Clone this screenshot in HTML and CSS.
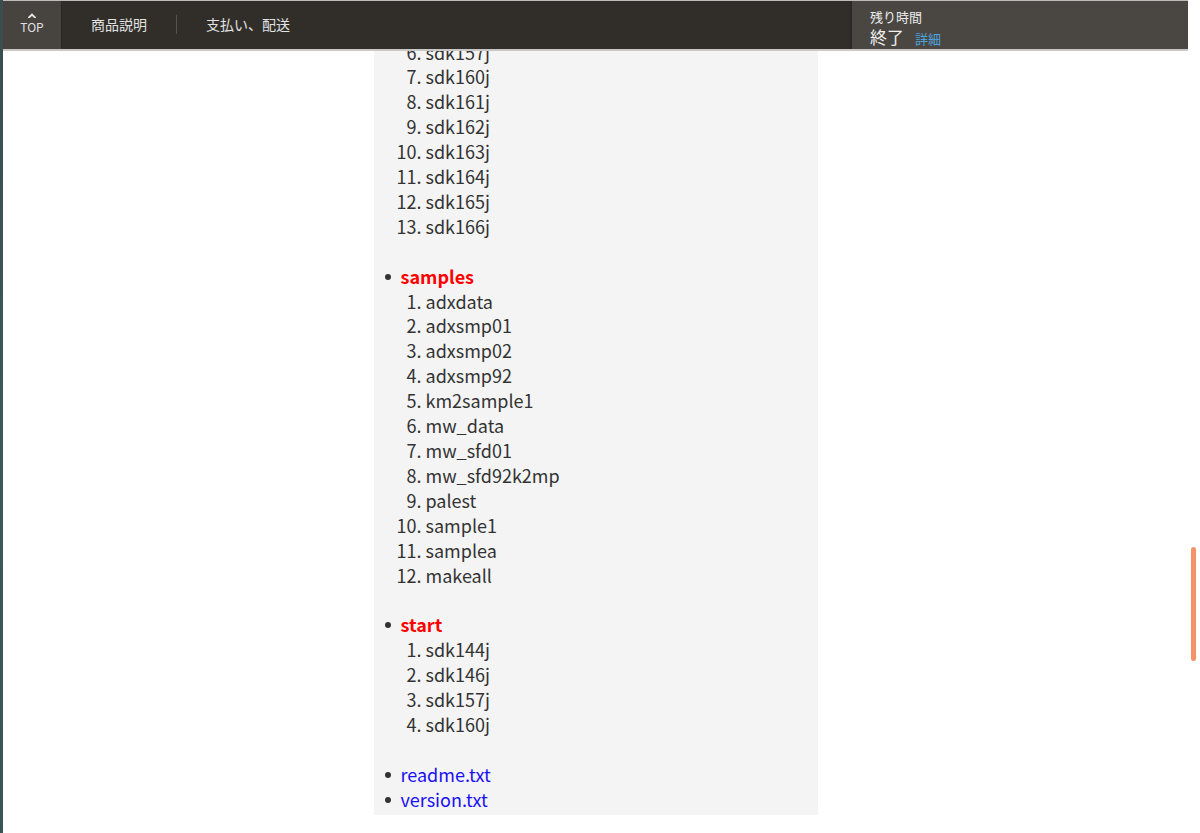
FILE: index.html
```html
<!DOCTYPE html>
<html lang="ja">
<head>
<meta charset="utf-8">
<title>商品説明</title>
<link rel="stylesheet" href="styles.css">
</head>
<body>
<div class="frame">
  <div class="strip"></div>
  <div class="page">
    <header class="topbar">
      <a class="top-btn" href="#">
        <svg class="top-icon" width="8" height="5" viewBox="0 0 8 5"><path d="M1 4.5 L4 1.5 L7 4.5" fill="none" stroke="#e6e6e6" stroke-width="1.8" stroke-linecap="square"/></svg>
        <span>TOP</span>
      </a>
      <nav class="nav">
        <a href="#" class="nav-item">商品説明</a>
        <span class="nav-sep"></span>
        <a href="#" class="nav-item">支払い、配送</a>
      </nav>
      <div class="remain">
        <div class="remain-label">残り時間</div>
        <div class="remain-value">終了<a href="#" class="remain-link">詳細</a></div>
      </div>
    </header>
    <main class="content">
      <ul class="tree">
        <li class="nomark">
          <ol start="6" class="sub">
            <li>sdk157j</li>
            <li>sdk160j</li>
            <li>sdk161j</li>
            <li>sdk162j</li>
            <li>sdk163j</li>
            <li>sdk164j</li>
            <li>sdk165j</li>
            <li>sdk166j</li>
          </ol>
        </li>
        <li><span class="dir">samples</span>
          <ol class="sub">
            <li>adxdata</li>
            <li>adxsmp01</li>
            <li>adxsmp02</li>
            <li>adxsmp92</li>
            <li>km2sample1</li>
            <li>mw_data</li>
            <li>mw_sfd01</li>
            <li>mw_sfd92k2mp</li>
            <li>palest</li>
            <li>sample1</li>
            <li>samplea</li>
            <li>makeall</li>
          </ol>
        </li>
        <li><span class="dir">start</span>
          <ol class="sub">
            <li>sdk144j</li>
            <li>sdk146j</li>
            <li>sdk157j</li>
            <li>sdk160j</li>
          </ol>
        </li>
        <li><span class="file">readme.txt</span></li>
        <li><span class="file">version.txt</span></li>
      </ul>
    </main>
  </div>
  <div class="gutter"><div class="thumb"></div></div>
</div>
</body>
</html>
```
FILE: styles.css
```css
html, body {
  margin: 0;
  padding: 0;
  background: #ffffff;
}
body {
  font-family: "Noto Sans CJK JP", "Noto Sans", sans-serif;
  color: #333333;
}
.frame {
  display: flex;
  height: 833px;
  overflow: hidden;
}
.strip {
  width: 3px;
  flex: none;
  background: linear-gradient(#3a4d50, #3d5859 50%, #3a5556);
}
.page {
  position: relative;
  width: 1185px;
  flex: none;
  background: #ffffff;
}
.gutter {
  position: relative;
  flex: 1;
  background: #ffffff;
}
.thumb {
  position: absolute;
  left: 3px;
  top: 547px;
  width: 5px;
  height: 114px;
  border-radius: 3px;
  background: #f4926a;
}
.topbar {
  position: absolute;
  top: 0;
  left: 0;
  right: 0;
  height: 48px;
  display: flex;
  background: #312e2a;
  border-top: 1px solid #bdbcba;
  border-bottom: 2px solid #c9c8c6;
  z-index: 5;
}
.top-btn {
  width: 59px;
  flex: none;
  background: #474440;
  display: flex;
  flex-direction: column;
  align-items: center;
  justify-content: center;
  text-decoration: none;
  color: #e0e0e0;
  font-size: 12px;
  line-height: 13px;
  gap: 2px;
  padding-bottom: 4px;
  box-sizing: border-box;
  border-right: 1px solid #2a2824;
}
.top-icon {
  display: block;
}
.nav {
  flex: 1;
  display: flex;
  align-items: center;
  padding-left: 29px;
  padding-bottom: 2px;
}
.nav-item {
  color: #e2e2e2;
  text-decoration: none;
  font-size: 14px;
}
.nav-sep {
  width: 1px;
  height: 19px;
  background: #55524d;
  margin: 0 29px;
}
.remain {
  width: 338px;
  flex: none;
  background: #4a4742;
  border-left: 2px solid #2c2a26;
  padding-left: 18px;
  padding-top: 8px;
  box-sizing: border-box;
}
.remain-label {
  color: #eaeaea;
  font-size: 13px;
  line-height: 16px;
}
.remain-value {
  color: #f0f0f0;
  font-size: 17px;
  line-height: 20px;
  margin-top: 2px;
}
.remain-link {
  color: #4da3de;
  font-size: 13px;
  text-decoration: none;
  margin-left: 11px;
}
.content {
  width: 444px;
  margin: 0 auto;
  background: #f4f4f4;
  padding: 39.5px 0 3.5px 0;
  box-sizing: border-box;
}
.tree {
  margin: 0;
  padding-left: 27px;
  list-style: none;
  font-size: 18px;
  line-height: 24.9px;
}
.tree > li {
  position: relative;
}
.tree > li::before {
  content: "";
  position: absolute;
  left: -16px;
  top: 10px;
  width: 6px;
  height: 6px;
  border-radius: 50%;
  background: #333333;
}
.tree > li.nomark::before {
  display: none;
}
.sub {
  margin: 0 0 24.9px 0;
  padding-left: 25px;
}
.dir {
  color: #ff0000;
  font-weight: bold;
}
.file {
  color: #1a10f5;
}
```
